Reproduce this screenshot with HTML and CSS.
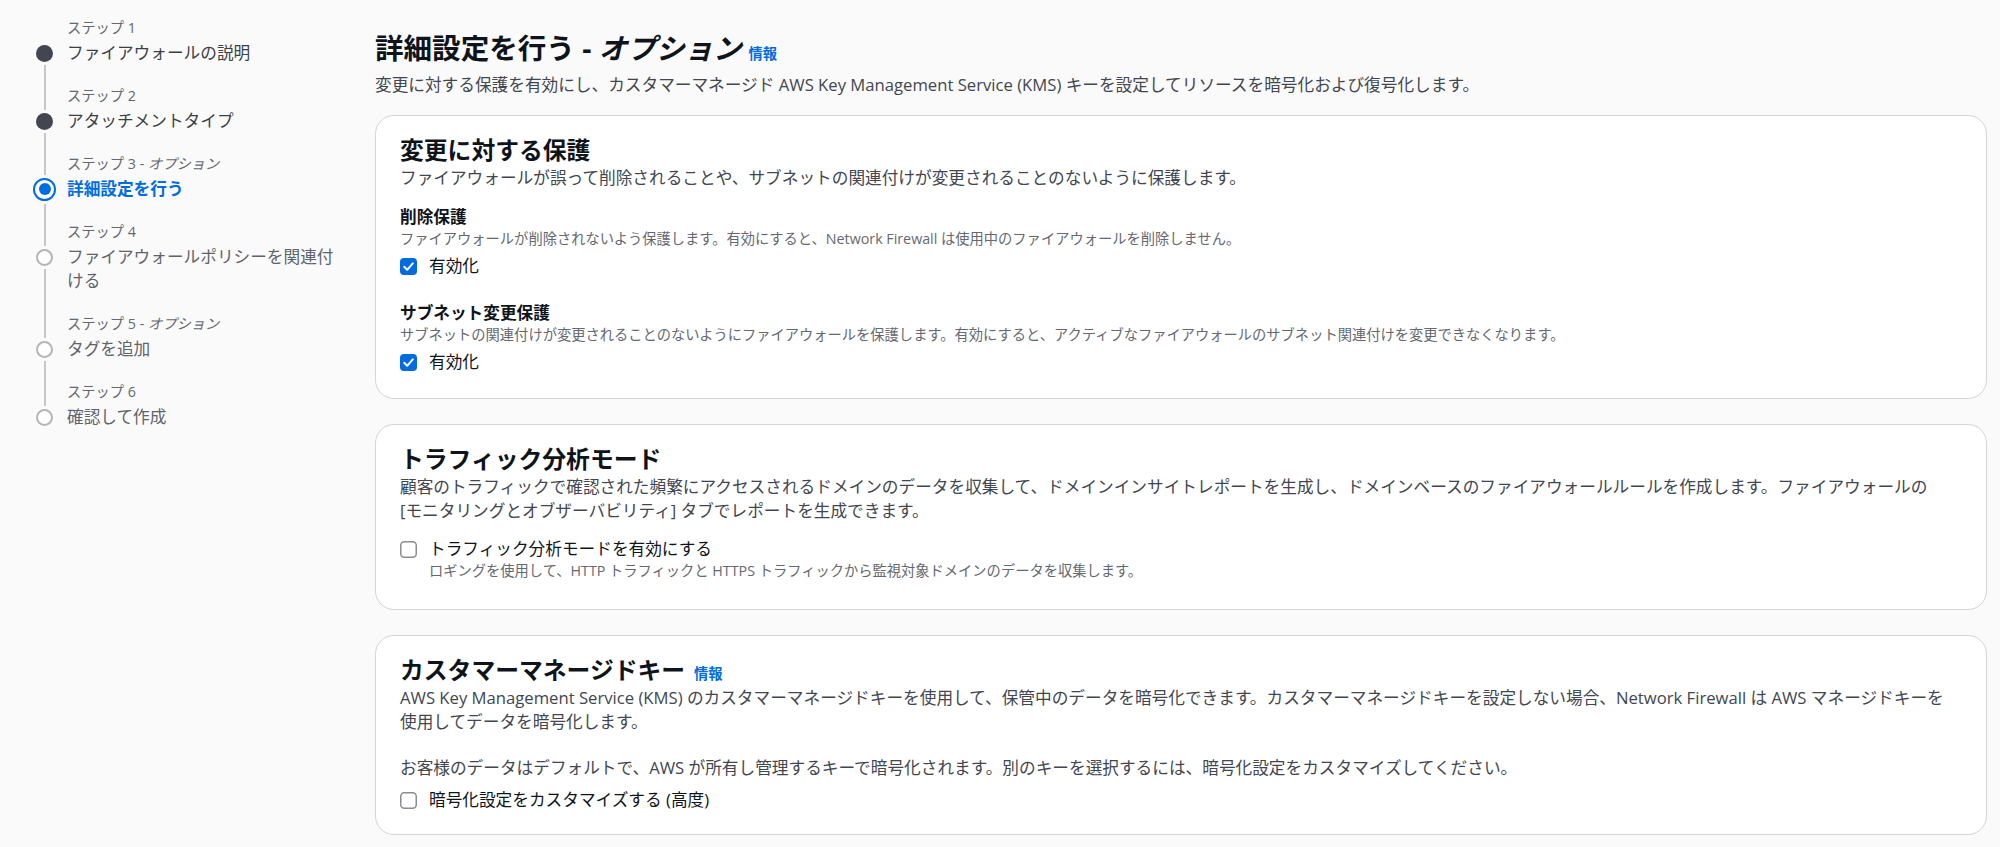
FILE: index.html
```html
<!DOCTYPE html>
<html lang="ja">
<head>
<meta charset="utf-8">
<title>詳細設定を行う</title>
<link rel="stylesheet" href="styles.css">
</head>
<body>
<div class="layout">
  <nav class="wizard-nav">
    <ol class="steps">
      <li class="step done">
        <div class="rail"><span class="seg top hidden"></span><span class="dot"></span><span class="seg bottom"></span></div>
        <div class="step-text"><div class="step-label">ステップ 1</div><div class="step-title">ファイアウォールの説明</div></div>
      </li>
      <li class="step done">
        <div class="rail"><span class="seg top"></span><span class="dot"></span><span class="seg bottom"></span></div>
        <div class="step-text"><div class="step-label">ステップ 2</div><div class="step-title">アタッチメントタイプ</div></div>
      </li>
      <li class="step active">
        <div class="rail"><span class="seg top"></span><span class="dot"></span><span class="seg bottom"></span></div>
        <div class="step-text"><div class="step-label">ステップ 3 - <em>オプション</em></div><div class="step-title">詳細設定を行う</div></div>
      </li>
      <li class="step todo">
        <div class="rail"><span class="seg top"></span><span class="dot"></span><span class="seg bottom"></span></div>
        <div class="step-text"><div class="step-label">ステップ 4</div><div class="step-title">ファイアウォールポリシーを関連付ける</div></div>
      </li>
      <li class="step todo">
        <div class="rail"><span class="seg top"></span><span class="dot"></span><span class="seg bottom"></span></div>
        <div class="step-text"><div class="step-label">ステップ 5 - <em>オプション</em></div><div class="step-title">タグを追加</div></div>
      </li>
      <li class="step todo last">
        <div class="rail"><span class="seg top"></span><span class="dot"></span><span class="seg bottom hidden"></span></div>
        <div class="step-text"><div class="step-label">ステップ 6</div><div class="step-title">確認して作成</div></div>
      </li>
    </ol>
  </nav>

  <main class="main">
    <header class="page-header">
      <h1 class="page-title">詳細設定を行う - <em>オプション</em><a class="info" href="#">情報</a></h1>
      <p class="page-desc">変更に対する保護を有効にし、カスタマーマネージド AWS Key Management Service (KMS) キーを設定してリソースを暗号化および復号化します。</p>
    </header>

    <section class="card">
      <h2 class="card-title">変更に対する保護</h2>
      <p class="card-desc">ファイアウォールが誤って削除されることや、サブネットの関連付けが変更されることのないように保護します。</p>

      <div class="field first">
        <div class="field-label">削除保護</div>
        <div class="field-desc">ファイアウォールが削除されないよう保護します。有効にすると、Network Firewall は使用中のファイアウォールを削除しません。</div>
        <label class="checkbox">
          <svg class="cb" width="17" height="17" viewBox="0 0 17 17"><rect x="0" y="0" width="17" height="17" rx="4" fill="#006ce0"/><path d="M4.2 8.8 L7.2 11.8 L12.8 5.4" fill="none" stroke="#fff" stroke-width="2" stroke-linecap="round" stroke-linejoin="round"/></svg>
          <span class="cb-text">有効化</span>
        </label>
      </div>

      <div class="field">
        <div class="field-label">サブネット変更保護</div>
        <div class="field-desc">サブネットの関連付けが変更されることのないようにファイアウォールを保護します。有効にすると、アクティブなファイアウォールのサブネット関連付けを変更できなくなります。</div>
        <label class="checkbox">
          <svg class="cb" width="17" height="17" viewBox="0 0 17 17"><rect x="0" y="0" width="17" height="17" rx="4" fill="#006ce0"/><path d="M4.2 8.8 L7.2 11.8 L12.8 5.4" fill="none" stroke="#fff" stroke-width="2" stroke-linecap="round" stroke-linejoin="round"/></svg>
          <span class="cb-text">有効化</span>
        </label>
      </div>
    </section>

    <section class="card">
      <h2 class="card-title">トラフィック分析モード</h2>
      <p class="card-desc">顧客のトラフィックで確認された頻繁にアクセスされるドメインのデータを収集して、ドメインインサイトレポートを生成し、ドメインベースのファイアウォールルールを作成します。ファイアウォールの<br>[モニタリングとオブザーバビリティ] タブでレポートを生成できます。</p>
      <div class="check-block">
        <label class="checkbox">
          <svg class="cb" width="17" height="17" viewBox="0 0 17 17"><rect x="0.75" y="0.75" width="15.5" height="15.5" rx="3.5" fill="#fff" stroke="#8c8c94" stroke-width="1.5"/></svg>
          <span class="cb-text">トラフィック分析モードを有効にする</span>
        </label>
        <div class="cb-desc">ロギングを使用して、HTTP トラフィックと HTTPS トラフィックから監視対象ドメインのデータを収集します。</div>
      </div>
    </section>

    <section class="card last">
      <h2 class="card-title">カスタマーマネージドキー<a class="info" href="#">情報</a></h2>
      <p class="card-desc">AWS Key Management Service (KMS) のカスタマーマネージドキーを使用して、保管中のデータを暗号化できます。カスタマーマネージドキーを設定しない場合、Network Firewall は AWS マネージドキーを<br>使用してデータを暗号化します。</p>
      <p class="card-note">お客様のデータはデフォルトで、AWS が所有し管理するキーで暗号化されます。別のキーを選択するには、暗号化設定をカスタマイズしてください。</p>
      <label class="checkbox kms">
        <svg class="cb" width="17" height="17" viewBox="0 0 17 17"><rect x="0.75" y="0.75" width="15.5" height="15.5" rx="3.5" fill="#fff" stroke="#8c8c94" stroke-width="1.5"/></svg>
        <span class="cb-text">暗号化設定をカスタマイズする (高度)</span>
      </label>
    </section>
  </main>
</div>
</body>
</html>
```

FILE: styles.css
```css
* { box-sizing: border-box; }

html, body {
  margin: 0;
  padding: 0;
}

body {
  background: #fafafa;
  color: #0f141a;
  font-family: "Open Sans", "Noto Sans CJK JP", sans-serif;
  font-size: 16.66px;
  line-height: 24px;
}

.layout {
  display: flex;
  align-items: flex-start;
  min-height: 847px;
}

/* ---------- wizard navigation ---------- */
.wizard-nav {
  width: 375px;
  flex: none;
  padding: 18px 0 0 36px;
}

.steps {
  list-style: none;
  margin: 0;
  padding: 0;
}

.step {
  display: flex;
  gap: 14px;
}

.rail {
  width: 17px;
  flex: none;
  display: flex;
  flex-direction: column;
  align-items: center;
}

.seg {
  width: 2px;
  background: #c6c6cd;
}

.seg.top {
  flex: none;
  height: 23.5px;
  margin-bottom: 3px;
}

.seg.bottom {
  flex: 1;
  margin-top: 3px;
}

.seg.hidden {
  background: transparent;
}

.dot {
  flex: none;
  width: 17px;
  height: 17px;
  border-radius: 50%;
}

.step.done .dot {
  background: #424650;
}

.step.todo .dot {
  background: #fff;
  border: 2px solid #b4b4bb;
}

.step.active .seg.top {
  height: 20.5px;
}

.step.active .dot {
  width: 23px;
  height: 23px;
  border: 2.5px solid #006ce0;
  background: #fff;
  display: flex;
  align-items: center;
  justify-content: center;
}

.step.active .dot::after {
  content: "";
  width: 12px;
  height: 12px;
  border-radius: 50%;
  background: #006ce0;
}

.step-text {
  width: 280px;
  padding-bottom: 21px;
}

.step-label {
  font-size: 14.28px;
  line-height: 20px;
  color: #656871;
  margin-bottom: 3px;
}

.step-label em {
  font-style: italic;
}

.step-title {
  font-size: 16.66px;
  line-height: 24px;
  color: #3b3f48;
}

.step.active .step-title {
  color: #006ce0;
  font-weight: 700;
}

.step.todo .step-title {
  color: #5f636c;
}

/* ---------- main ---------- */
.main {
  flex: 1;
  min-width: 0;
  padding: 30px 13px 0 0;
}

.page-title {
  margin: 0;
  font-size: 28.56px;
  line-height: 36px;
  font-weight: 700;
  color: #0f141a;
}

.page-title em {
  font-style: italic;
}

.info {
  font-size: 14.28px;
  line-height: 1;
  font-weight: 700;
  color: #006ce0;
  text-decoration: none;
  margin-left: 7px;
  vertical-align: baseline;
}

.card-title .info {
  margin-left: 9px;
}

.page-desc {
  margin: 7px 0 0;
  color: #424650;
}

.card {
  background: #fff;
  border: 1px solid #d4d4d9;
  border-radius: 19px;
  padding: 20px 24px 24px;
  margin-top: 25px;
}

.card.last {
  padding-bottom: 22px;
}

.page-header + .card {
  margin-top: 18px;
}

.card-title {
  margin: 0;
  font-size: 23.8px;
  line-height: 29px;
  font-weight: 700;
  color: #0f141a;
}

.card-desc {
  margin: 1px 0 0;
  color: #424650;
}

.card-note {
  margin: 22px 0 0;
  color: #424650;
}

.field {
  margin-top: 23px;
}

.field.first {
  margin-top: 15px;
}

.field-label {
  font-weight: 700;
  color: #0f141a;
}

.field-desc {
  font-size: 14.28px;
  line-height: 19px;
  color: #656871;
}

.checkbox {
  display: flex;
  align-items: flex-start;
  gap: 12px;
  margin-top: 6px;
  cursor: pointer;
}

.checkbox .cb {
  flex: none;
  margin-top: 3.5px;
}

.cb-text {
  color: #0f141a;
}

.check-block {
  margin-top: 14px;
  padding-bottom: 5px;
}

.check-block .checkbox {
  margin-top: 0;
}

.cb-desc {
  padding-left: 29px;
  font-size: 14.28px;
  line-height: 19px;
  color: #656871;
}

.checkbox.kms {
  margin-top: 8px;
}
```
